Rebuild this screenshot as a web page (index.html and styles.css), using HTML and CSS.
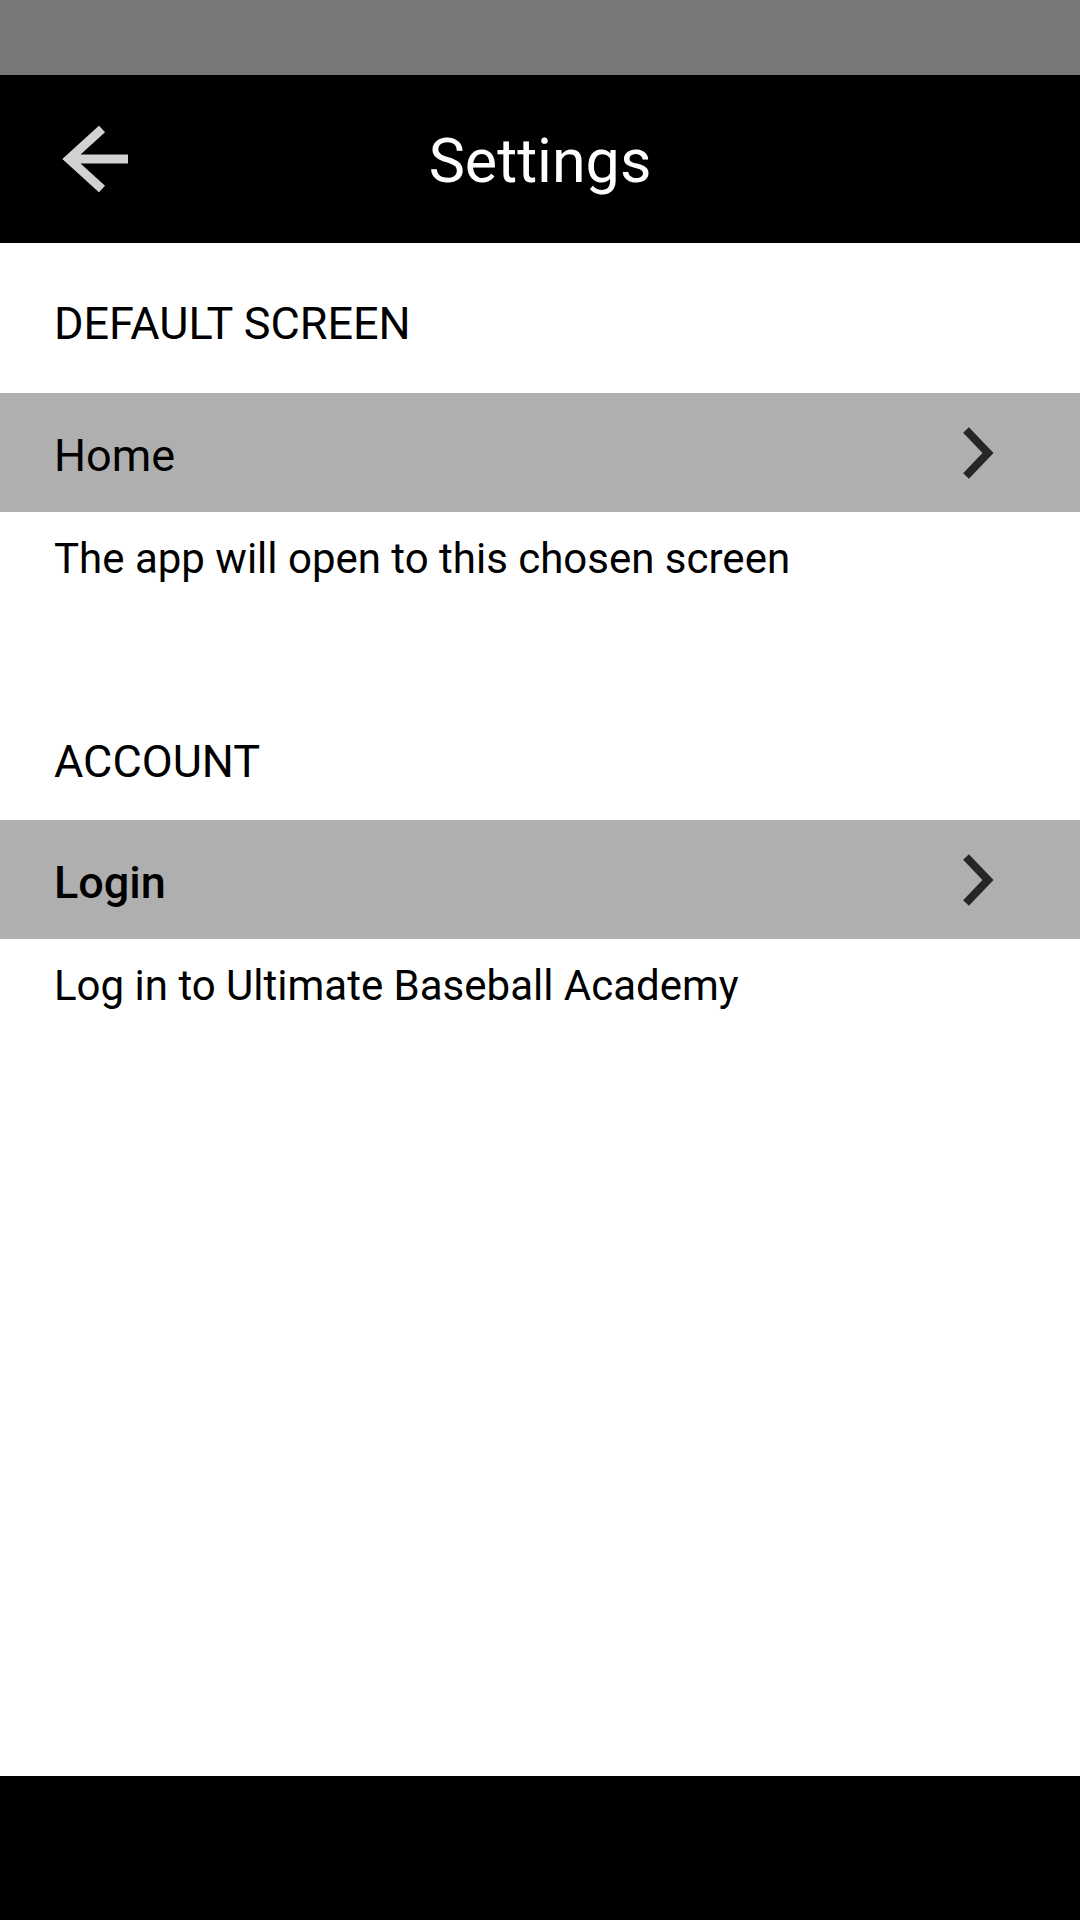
FILE: index.html
```html
<!DOCTYPE html>
<html lang="en">
    <head>
        <meta charset="UTF-8">
        <meta name="viewport" content="width=device-width, initial-scale=1.0">
        <title>Settings</title>
        <link rel="stylesheet" href="styles.css">
    </head>
 <body>
     <div class="status-bar"></div>
     <div class="toolbar">
         <svg class="back" width="66" height="66" viewBox="0 0 66 66">
             <path d="M40 3 L7 33 L40 63 M7 33 H66" fill="none" stroke="#d2d2d2" stroke-width="9"/>
         </svg>
         <h1 class="title">Settings</h1>
     </div>
     <div class="content">
         <div class="section section-first">
             <div class="label">DEFAULT SCREEN</div>
             <div class="row">
                 <span class="row-text">Home</span>
                 <svg class="chevron" width="40" height="56" viewBox="0 0 40 56">
                     <path d="M8 5 L30 28 L8 51" fill="none" stroke="#262626" stroke-width="8"/>
                 </svg>
             </div>
             <div class="desc">The app will open to this chosen screen</div>
         </div>
         <div class="section section-account">
             <div class="label">ACCOUNT</div>
             <div class="row">
                 <span class="row-text bold">Login</span>
                 <svg class="chevron" width="40" height="56" viewBox="0 0 40 56">
                     <path d="M8 5 L30 28 L8 51" fill="none" stroke="#262626" stroke-width="8"/>
                 </svg>
             </div>
             <div class="desc">Log in to Ultimate Baseball Academy</div>
         </div>
     </div>
     <div class="nav-bar"></div>
 </body>
 </html>
```

FILE: styles.css
```css
body {
    margin: 0;
    font-family: Roboto, "Noto Sans", sans-serif;
    background-color: #fff;
    color: #000;
    height: 1920px;
    display: flex;
    flex-direction: column;
}
.status-bar {
    height: 75px;
    background-color: #787878;
}
.toolbar {
    height: 168px;
    background-color: #000;
    position: relative;
    display: flex;
    align-items: center;
    justify-content: center;
}
.back {
    position: absolute;
    left: 62px;
    top: 51px;
}
.title {
    margin: 0;
    color: #fff;
    font-size: 61px;
    font-weight: 400;
    line-height: 70px;
    padding-top: 4px;
}
.content {
    flex: 1;
}
.section-first {
    padding-top: 55px;
}
.section-account {
    margin-top: 152px;
}
.label {
    font-size: 45px;
    line-height: 52px;
    padding: 0 54px;
    margin-bottom: 43px;
}
.section-account .label {
    margin-bottom: 32px;
}
.row {
    height: 119px;
    background-color: #afafaf;
    display: flex;
    align-items: center;
    justify-content: space-between;
    padding: 0 82px 0 54px;
}
.row-text {
    font-size: 45px;
    line-height: 52px;
    padding-top: 6px;
}
.bold {
    font-weight: 500;
}
.desc {
    font-size: 42px;
    line-height: 50px;
    padding: 22px 54px 0;
}
.nav-bar {
    height: 144px;
    background-color: #000;
}
```
